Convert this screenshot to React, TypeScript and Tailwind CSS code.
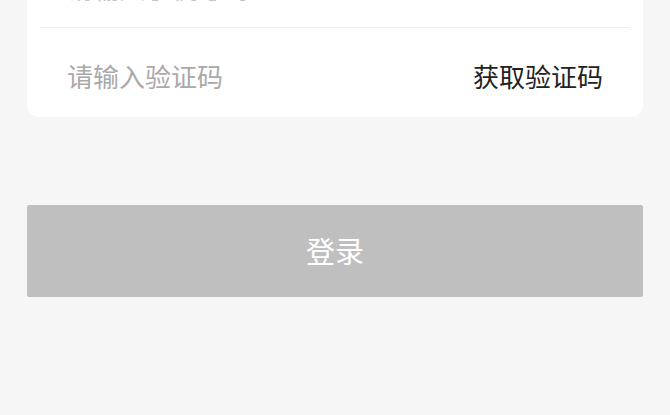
export default function App() {
  const font = { fontFamily: '"Noto Sans CJK SC", "Noto Sans", sans-serif' };

  return (
    <div className="h-[415px] w-[670px] overflow-hidden bg-[#f6f6f6]" style={font}>
      {/* Form card (scrolled, top row partly out of view) */}
      <div className="mx-[27px] -mt-[52px] rounded-[12px] bg-white">
        <div className="flex h-[79px] items-center px-10 pt-0">
          <span className="text-[26px] text-[#c4c4c4]">请输入手机号码</span>
        </div>
        <div className="mx-[13px] h-px bg-[#efefef]" />
        <div className="flex h-[89px] items-center justify-between px-10 pt-1.5">
          <span className="text-[26px] text-[#a9a9a9]">请输入验证码</span>
          <button className="text-[26px] text-[#222]">获取验证码</button>
        </div>
      </div>

      <div className="mx-[27px] mt-[88px]">
        <button className="flex h-[92px] w-full items-center justify-center rounded-[2px] bg-[#bfbfbf] text-[29px] text-white">
          登录
        </button>
      </div>
    </div>
  );
}
